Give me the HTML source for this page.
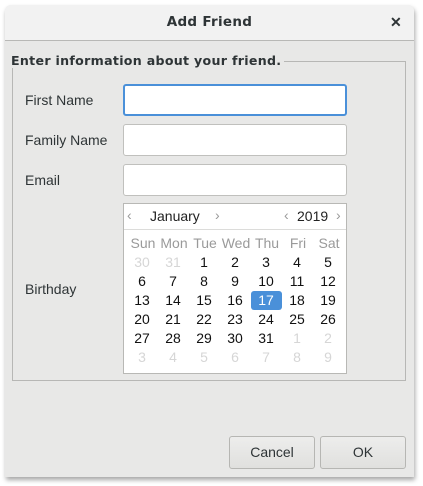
<!DOCTYPE html>
<html><head><style>
*{margin:0;padding:0;box-sizing:border-box}
body{width:423px;height:486px;background:#fff;position:relative;overflow:hidden;font-family:"Liberation Sans",sans-serif;color:#2e3436}
.win{position:absolute;left:5px;top:5px;width:409px;height:472px;background:#e8e8e7;border-radius:6px 6px 0 0;box-shadow:1px 3px 5px rgba(0,0,0,.35)}
.tb{position:absolute;left:5px;top:5px;width:409px;height:36px;background:#f2f2f2;border-radius:6px 6px 0 0;border-bottom:1px solid #b8b8b6}
.t{position:absolute;font-size:14px;white-space:nowrap}
.frame{position:absolute;left:12px;top:61px;width:394px;height:320px;border:1px solid #b7b7b5}
.leg{position:absolute;left:11px;top:53px;background:#e8e8e7;font-family:"DejaVu Sans",sans-serif;font-weight:bold;font-size:12.6px;padding-right:3px;letter-spacing:.3px}
.in{position:absolute;left:123px;width:224px;height:32px;background:#fff;border:1px solid #c0c0bd;border-radius:3px}
.cal{position:absolute;left:123px;top:203px;width:224px;height:171px;background:#fff;border:1px solid #b8b8b5}
.c{position:absolute;width:30px;text-align:center;font-size:14px}
.btn{position:absolute;top:436px;height:33px;width:86px;border:1px solid #b6b6b3;border-radius:3px;background:linear-gradient(#ededec,#e0e0de);text-align:center;line-height:31px;font-size:14px}
</style></head><body>
<div class="win"></div>
<div class="tb"></div>
<div class="t" style="left:0;width:419px;text-align:center;top:14px;font-family:'DejaVu Sans',sans-serif;font-weight:bold;font-size:13.5px;letter-spacing:.3px">Add Friend</div>
<div class="t" style="left:390px;top:14px;font-weight:bold;font-size:14px">✕</div>
<div class="frame"></div>
<div class="leg">Enter information about your friend.</div>
<div class="t" style="left:25px;top:92px">First Name</div>
<div class="t" style="left:25px;top:132px">Family Name</div>
<div class="t" style="left:25px;top:172px">Email</div>
<div class="t" style="left:25px;top:281px">Birthday</div>
<div class="in" style="top:84px;border:2px solid #4a90d9"></div>
<div class="in" style="top:124px"></div>
<div class="in" style="top:164px"></div>
<div class="cal">
<div style="position:absolute;left:0;top:25px;width:222px;border-top:1px solid #dcdcda"></div>
</div>
<div class="t" style="left:127px;top:207px;color:#999">‹</div>
<div class="t" style="left:150px;top:208px;color:#222">January</div>
<div class="t" style="left:215px;top:207px;color:#999">›</div>
<div class="t" style="left:284px;top:207px;color:#999">‹</div>
<div class="t" style="left:297px;top:208px;color:#222">2019</div>
<div class="t" style="left:336px;top:207px;color:#999">›</div>
<div style="position:absolute;left:251px;top:291px;width:31px;height:19px;background:#4a90d9;border-radius:3px"></div>
<div id="g"></div>
<script>
var cx=[142,173,204,235,266,297,328],h='';
var names=['Sun','Mon','Tue','Wed','Thu','Fri','Sat'];
for(var i=0;i<7;i++)h+='<div class="c" style="left:'+(cx[i]-15)+'px;top:235px;color:#9a9a9a;width:32px">'+names[i]+'</div>';
var d=[30,31];for(var i=1;i<=31;i++)d.push(i);for(var i=1;i<=9;i++)d.push(i);
for(var k=0;k<42;k++){var r=Math.floor(k/7),c=k%7;var dim=(k<2||k>=33);var col=dim?'#d6d6d6':(d[k]==17?'#fff':'#111');
h+='<div class="c" style="left:'+(cx[c]-15)+'px;top:'+(254+r*19)+'px;color:'+col+'">'+d[k]+'</div>';}
document.getElementById('g').innerHTML=h;
</script>
<div class="btn" style="left:229px">Cancel</div>
<div class="btn" style="left:320px">OK</div>
</body></html>
